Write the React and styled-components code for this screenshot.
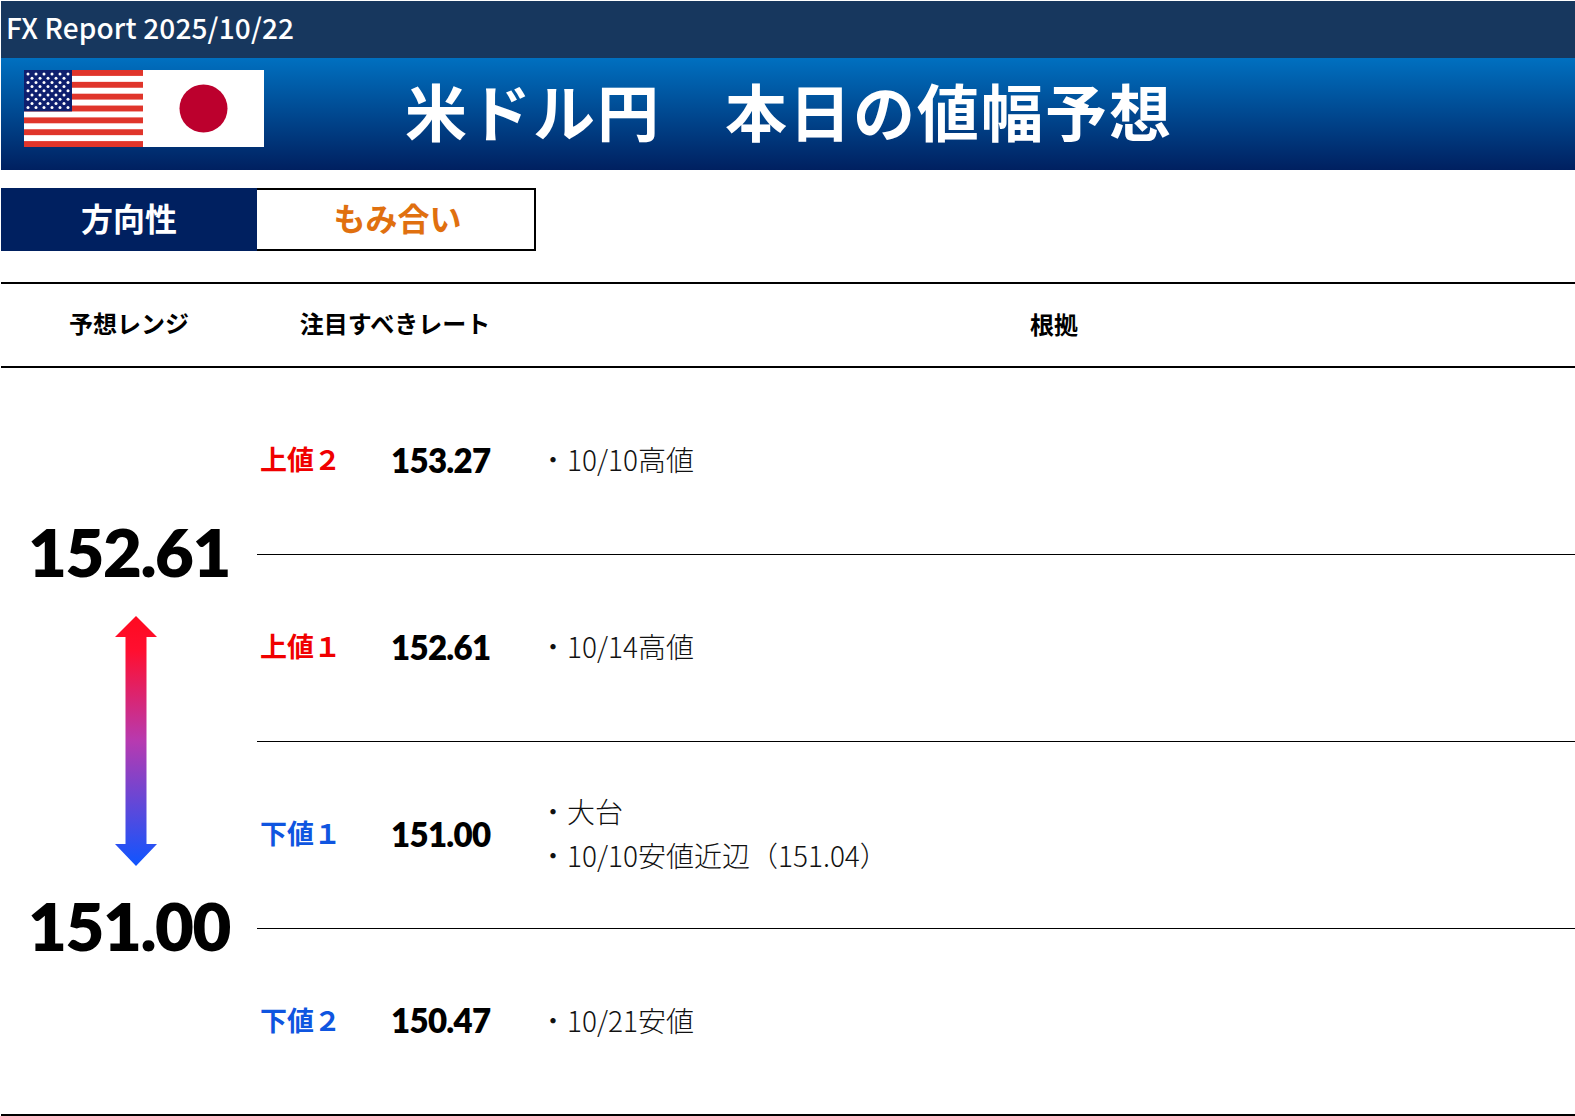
import React from "react";
import styled, { createGlobalStyle } from "styled-components";

const Global = createGlobalStyle`
  html, body { margin: 0; padding: 0; background: #fff; }
  body { font-family: "Noto Sans CJK JP", "Noto Sans", sans-serif; color: #000; }
`;
const Page = styled.div`
  width: 1575px; height: 1116px; padding: 1px 0 0 1px; box-sizing: border-box; overflow: hidden;
`;
const TopBar = styled.div`
  height: 57px; background: #17375e; color: #fff; display: flex; align-items: center;
  padding: 0 0 5px 5px; box-sizing: border-box; font-size: 28px; font-weight: 500; line-height: 1; letter-spacing: 0.15px;
`;
const Banner = styled.div`
  height: 112px; display: flex; align-items: flex-start;
  background: linear-gradient(180deg, #0070c0 0%, #002060 100%);
`;
const Flags = styled.div`
  margin: 12px 0 0 23px; display: flex; flex: none; width: 240px; height: 77px;
`;
const Title = styled.h1`
  margin: 21px 0 0 141px; color: #fff; font-size: 62px; font-weight: 700; line-height: 1;
  letter-spacing: 2px; white-space: pre;
`;
const TabRow = styled.div`
  display: flex; margin-top: 18px; height: 63px;
`;
const DirectionLabel = styled.div`
  width: 256px; background: #002060; color: #fff; display: flex; align-items: center; justify-content: center;
  font-size: 32px; font-weight: 700; padding-bottom: 6px; box-sizing: border-box;
`;
const DirectionValue = styled.div`
  width: 279px; box-sizing: border-box; border: 2px solid #000; border-left: 0; color: #e0700f; display: flex; align-items: center;
  justify-content: center; font-size: 32px; font-weight: 700; padding: 0 0 6px 4px;
`;
const HeadRow = styled.div`
  margin-top: 31px; height: 82px; border-top: 2px solid #000; border-bottom: 2px solid #000;
  display: grid; grid-template-columns: 256px 276px 1fr; align-items: center; text-align: center;
  font-size: 24px; font-weight: 700;
`;
const HeadCell = styled.div`
  padding-bottom: ${p => p.$pad || 5}px;
`;
const Body = styled.div`
  display: grid; grid-template-columns: 256px 1fr; height: 746px; border-bottom: 2px solid #000;
`;
const RangeCol = styled.div`
  display: flex; flex-direction: column; align-items: center; justify-content: flex-start; padding-top: 150px;
`;
const RangeValue = styled.div`
  font: 800 67px/1 Lato, "Liberation Sans", sans-serif; height: 67px; letter-spacing: -1.4px;
`;
const ArrowWrap = styled.svg`
  display: block; width: 44px; height: 250px; margin: 31px 0 26px 14px;
`;
const Rows = styled.div`
  display: grid; grid-template-rows: repeat(3, 187px) 185px;
`;
const Row = styled.div`
  display: grid; grid-template-columns: 131px 157px 1fr; align-items: center; padding-left: 3px;
  border-bottom: ${p => (p.$last ? "0" : "1px solid #000")};
`;
const Level = styled.div`
  color: ${p => p.$color}; font-size: 27px; font-weight: 700; white-space: pre; padding-bottom: 5px;
`;
const Rate = styled.div`
  font: 800 33px/1 Lato, "Liberation Sans", sans-serif; letter-spacing: -0.7px; padding-bottom: 2px;
`;
const Reasons = styled.div`
  display: flex; flex-direction: column; gap: 10px; padding-bottom: 4px; margin-left: -9px;
`;
const Reason = styled.div`
  font-size: 28px; line-height: 34px; font-weight: 300; white-space: pre; color: #111;
`;

const stars = [];
for (let r = 0; r < 9; r++) {
  const n = r % 2 ? 5 : 6;
  for (let c = 0; c < n; c++) {
    stars.push(<circle key={`${r}-${c}`} cx={(r % 2 ? 8 : 4) + c * 8} cy={4 + r * 4.2} r="1.5" fill="#fff" />);
  }
}

const Flag = () => (
  <svg width="240" height="77" viewBox="0 0 240 77">
    <rect width="240" height="77" fill="#fff" />
    {[0, 1, 2, 3, 4, 5, 6].map(i => <rect key={i} x="0" y={i * 11.85} width="119" height="5.9" fill="#e0352b" />)}
    <rect width="48" height="41.4" fill="#0e1f6e" />
    {stars}
    <circle cx="179.5" cy="38.5" r="24" fill="#bc002d" />
  </svg>
);

const Arrow = () => (
  <ArrowWrap viewBox="0 0 44 250">
    <defs>
      <linearGradient id="rangeGrad" x1="0" y1="0" x2="0" y2="1">
        <stop offset="0" stopColor="#ff0a20" />
        <stop offset="0.14" stopColor="#ff0f30" />
        <stop offset="0.5" stopColor="#b73ab0" />
        <stop offset="1" stopColor="#0f55ff" />
      </linearGradient>
    </defs>
    <path d="M22 0 L43 21 L32.5 21 L32.5 228 L43 228 L22 250 L1 228 L11.5 228 L11.5 21 L1 21 Z" fill="url(#rangeGrad)" />
  </ArrowWrap>
);

const data = [
  { label: "上値２", color: "#f00000", rate: "153.27", reasons: ["・10/10高値"] },
  { label: "上値１", color: "#f00000", rate: "152.61", reasons: ["・10/14高値"] },
  { label: "下値１", color: "#0f55e0", rate: "151.00", reasons: ["・大台", "・10/10安値近辺（151.04）"] },
  { label: "下値２", color: "#0f55e0", rate: "150.47", reasons: ["・10/21安値"] },
];

export default function App() {
  return (
    <Page>
      <Global />
      <TopBar>FX Report 2025/10/22</TopBar>
      <Banner>
        <Flags><Flag /></Flags>
        <Title>米ドル円　本日の値幅予想</Title>
      </Banner>
      <TabRow>
        <DirectionLabel>方向性</DirectionLabel>
        <DirectionValue>もみ合い</DirectionValue>
      </TabRow>
      <HeadRow>
        <HeadCell>予想レンジ</HeadCell>
        <HeadCell>注目すべきレート</HeadCell>
        <HeadCell $pad={3}>根拠</HeadCell>
      </HeadRow>
      <Body>
        <RangeCol>
          <RangeValue>152.61</RangeValue>
          <Arrow />
          <RangeValue>151.00</RangeValue>
        </RangeCol>
        <Rows>
          {data.map((d, i) => (
            <Row key={d.label} $last={i === data.length - 1}>
              <Level $color={d.color}>{d.label}</Level>
              <Rate>{d.rate}</Rate>
              <Reasons>
                {d.reasons.map(r => <Reason key={r}>{r}</Reason>)}
              </Reasons>
            </Row>
          ))}
        </Rows>
      </Body>
    </Page>
  );
}
